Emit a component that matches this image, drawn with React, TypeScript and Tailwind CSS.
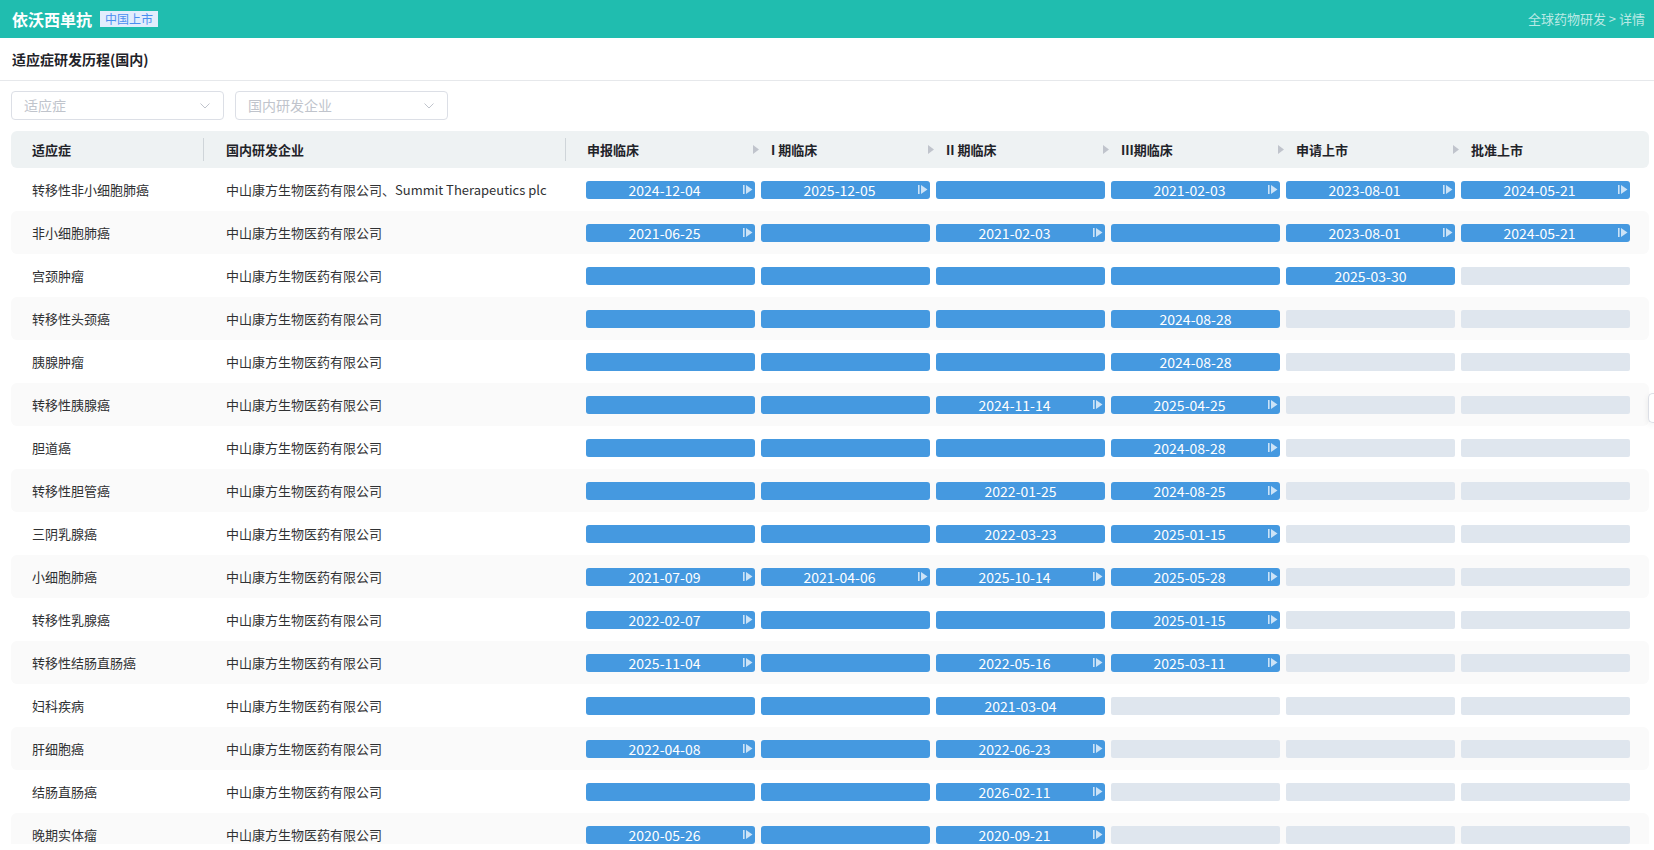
import React from 'react';

const phases = ['申报临床', 'I 期临床', 'II 期临床', 'III期临床', '申请上市', '批准上市'];

// 'x' = 无数据, 'b' = 进行中(无日期), 日期后带 '>' 表示有后续标记
const rows: { name: string; company: string; cells: string[] }[] = [
  { name: '转移性非小细胞肺癌', company: '中山康方生物医药有限公司、Summit Therapeutics plc', cells: ['2024-12-04>', '2025-12-05>', 'b', '2021-02-03>', '2023-08-01>', '2024-05-21>'] },
  { name: '非小细胞肺癌', company: '中山康方生物医药有限公司', cells: ['2021-06-25>', 'b', '2021-02-03>', 'b', '2023-08-01>', '2024-05-21>'] },
  { name: '宫颈肿瘤', company: '中山康方生物医药有限公司', cells: ['b', 'b', 'b', 'b', '2025-03-30', 'x'] },
  { name: '转移性头颈癌', company: '中山康方生物医药有限公司', cells: ['b', 'b', 'b', '2024-08-28', 'x', 'x'] },
  { name: '胰腺肿瘤', company: '中山康方生物医药有限公司', cells: ['b', 'b', 'b', '2024-08-28', 'x', 'x'] },
  { name: '转移性胰腺癌', company: '中山康方生物医药有限公司', cells: ['b', 'b', '2024-11-14>', '2025-04-25>', 'x', 'x'] },
  { name: '胆道癌', company: '中山康方生物医药有限公司', cells: ['b', 'b', 'b', '2024-08-28>', 'x', 'x'] },
  { name: '转移性胆管癌', company: '中山康方生物医药有限公司', cells: ['b', 'b', '2022-01-25', '2024-08-25>', 'x', 'x'] },
  { name: '三阴乳腺癌', company: '中山康方生物医药有限公司', cells: ['b', 'b', '2022-03-23', '2025-01-15>', 'x', 'x'] },
  { name: '小细胞肺癌', company: '中山康方生物医药有限公司', cells: ['2021-07-09>', '2021-04-06>', '2025-10-14>', '2025-05-28>', 'x', 'x'] },
  { name: '转移性乳腺癌', company: '中山康方生物医药有限公司', cells: ['2022-02-07>', 'b', 'b', '2025-01-15>', 'x', 'x'] },
  { name: '转移性结肠直肠癌', company: '中山康方生物医药有限公司', cells: ['2025-11-04>', 'b', '2022-05-16>', '2025-03-11>', 'x', 'x'] },
  { name: '妇科疾病', company: '中山康方生物医药有限公司', cells: ['b', 'b', '2021-03-04', 'x', 'x', 'x'] },
  { name: '肝细胞癌', company: '中山康方生物医药有限公司', cells: ['2022-04-08>', 'b', '2022-06-23>', 'x', 'x', 'x'] },
  { name: '结肠直肠癌', company: '中山康方生物医药有限公司', cells: ['b', 'b', '2026-02-11>', 'x', 'x', 'x'] },
  { name: '晚期实体瘤', company: '中山康方生物医药有限公司', cells: ['2020-05-26>', 'b', '2020-09-21>', 'x', 'x', 'x'] },
];

function Chevron() {
  return (
    <svg width="10" height="6" viewBox="0 0 10 6" fill="none">
      <path d="M0.5 0.5 L5 5 L9.5 0.5" stroke="#c0c4cc" strokeWidth="1" />
    </svg>
  );
}

function NextIcon() {
  return (
    <svg width="10" height="9" viewBox="0 0 10 9" className="mr-[2px] shrink-0">
      <rect x="0" y="0" width="1.6" height="9" fill="rgba(255,255,255,0.72)" />
      <polygon points="3,0 9.5,4.5 3,9" fill="rgba(255,255,255,0.72)" />
    </svg>
  );
}

function HeadArrow() {
  return (
    <svg width="6" height="9" viewBox="0 0 6 9" className="shrink-0">
      <polygon points="0,0 6,4.5 0,9" fill="#c0c4cc" />
    </svg>
  );
}

function Bar({ v }: { v: string }) {
  if (v === 'x') return <div className="w-[169px] h-[18px] bg-[#dfe6ee] rounded-[2px]" />;
  if (v === 'b') return <div className="w-[169px] h-[18px] bg-[#4599e0] rounded-[3px]" />;
  const icon = v.endsWith('>');
  const date = icon ? v.slice(0, -1) : v;
  return (
    <div className="w-[169px] h-[18px] bg-[#4599e0] rounded-[3px] flex items-center text-white text-[14px] leading-none">
      <span className="flex-1 text-center">{date}</span>
      {icon && <NextIcon />}
    </div>
  );
}

function Select({ placeholder }: { placeholder: string }) {
  return (
    <div className="w-[213px] h-[29px] border border-[#dcdfe6] rounded-[4px] flex items-center justify-between pl-[12px] pr-[13px] text-[14px] text-[#c0c4cc]">
      <span>{placeholder}</span>
      <Chevron />
    </div>
  );
}

export default function App() {
  return (
    <div className="relative w-full h-[850px] overflow-hidden bg-white font-['Noto_Sans_CJK_SC','Noto_Sans',sans-serif] text-[#303133]">
      {/* 顶栏 */}
      <div className="h-[38px] bg-[#20bdaf] flex items-center justify-between pl-[12px] pr-[9px]">
        <div className="flex items-center">
          <span className="text-white text-[16px] font-bold">依沃西单抗</span>
          <span className="ml-[8px] h-[16px] px-[5px] bg-[#e2edfd] text-[#4a8ff0] text-[12px] leading-[16px]">中国上市</span>
        </div>
        <div className="text-[13px] text-white/70">全球药物研发 &gt; 详情</div>
      </div>

      <div className="h-[43px] flex items-center px-[12px] border-b border-[#e6e8eb] text-[14px] font-bold text-[#1f2329]">
        适应症研发历程(国内)
      </div>

      {/* 筛选 */}
      <div className="flex gap-[11px] pl-[11px] pt-[10px]">
        <Select placeholder="适应症" />
        <Select placeholder="国内研发企业" />
      </div>

      {/* 表格 */}
      <div className="ml-[11px] mr-[5px] mt-[11px] h-[713px] overflow-hidden">
        <div className="h-[37px] bg-[#eef2f3] rounded-[6px] flex items-center text-[13px] font-bold text-[#1f2329]">
          <div className="w-[193px] pl-[21px] h-[23px] flex items-center border-r border-[#cfd5d9]">适应症</div>
          <div className="w-[362px] pl-[22px] h-[23px] flex items-center border-r border-[#cfd5d9]">国内研发企业</div>
          <div className="flex pl-[20px]">
            {phases.map((p, i) =>
              i === 0 ? (
                <div key={p} className="w-[167px] pl-[1px]">{p}</div>
              ) : (
                <div key={p} className="w-[175px] flex items-center">
                  <HeadArrow />
                  <span className="ml-[12px]">{p}</span>
                </div>
              )
            )}
          </div>
        </div>

        {rows.map((r, idx) => (
          <div key={idx} className={`h-[43px] flex items-center text-[13px] rounded-[6px] ${idx % 2 === 1 ? 'bg-[#fafafa]' : ''}`}>
            <div className="w-[193px] pl-[21px]">{r.name}</div>
            <div className="w-[362px] pl-[22px] whitespace-nowrap">{r.company}</div>
            <div className="flex gap-[6px] pl-[20px]">
              {r.cells.map((c, j) => (
                <Bar key={j} v={c} />
              ))}
            </div>
          </div>
        ))}
      </div>

      {/* 右侧收起把手 */}
      <div className="absolute right-0 top-[393px] w-[6px] h-[30px] bg-white border border-r-0 border-[#dcdfe6] rounded-l-[5px] shadow-[0_2px_6px_rgba(0,0,0,0.08)]" />
    </div>
  );
}
